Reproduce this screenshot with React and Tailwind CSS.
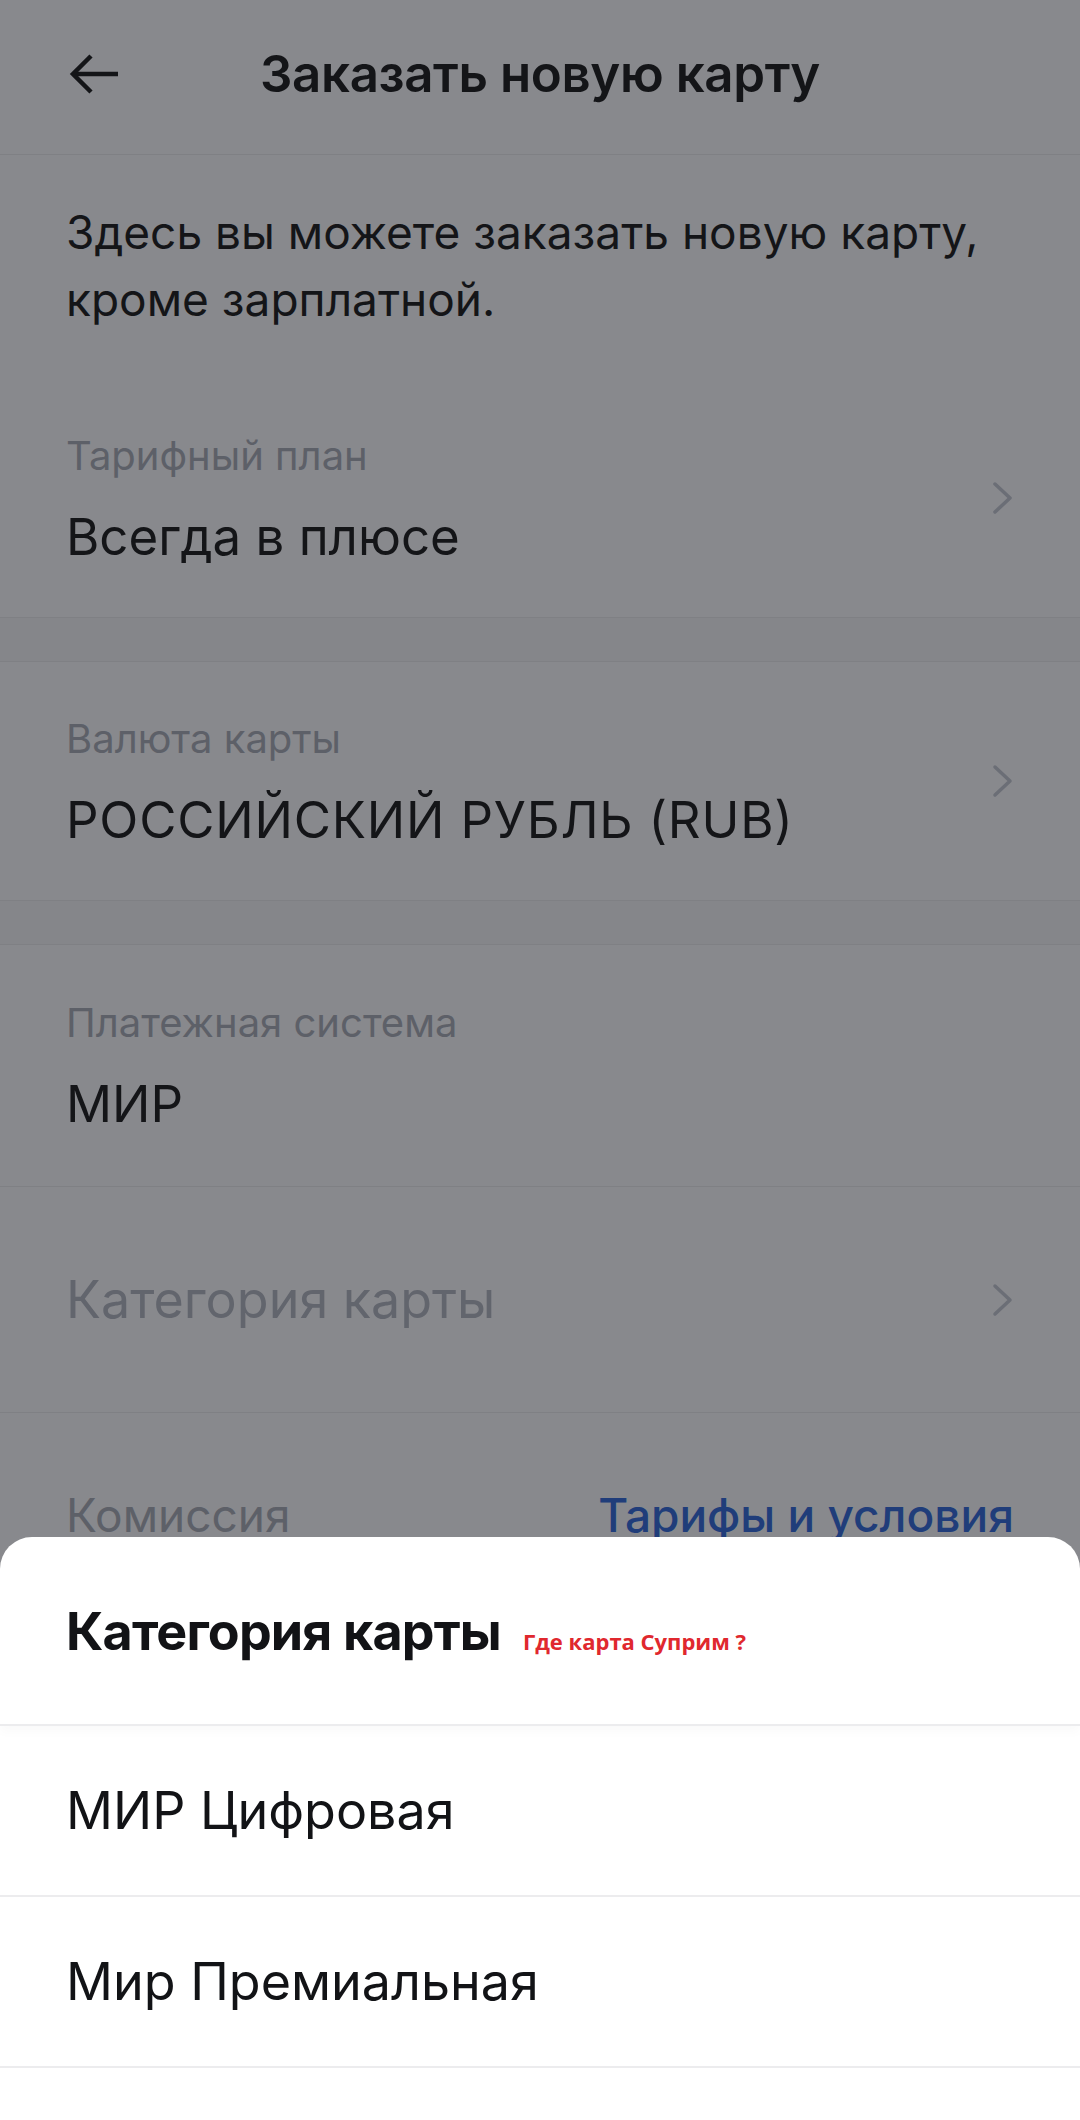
import React from 'react';

const font = { fontFamily: 'Inter, "Noto Sans", sans-serif' };

const Chevron = () => (
  <svg width="22" height="34" viewBox="0 0 22 34" fill="none" className="shrink-0">
    <path d="M3 3L18 17L3 31" stroke="#6b6e76" strokeWidth="3.5" strokeLinecap="round" strokeLinejoin="round" />
  </svg>
);

const FieldCard = ({ label, value, arrow, height = 'h-[238px]', valueClass = '' }) => (
  <div className={`${height} flex items-center justify-between px-[66px] bg-[#88898d]`}>
    <div className="flex flex-col">
      <span className="text-[40px] leading-[56px] text-[#5d6068]">{label}</span>
      <span className={`mt-[21px] text-[51px] leading-[64px] text-[#141518] ${valueClass}`}>{value}</span>
    </div>
    {arrow && <Chevron />}
  </div>
);

const Gap = () => <div className="h-[45px] bg-[#85868a] border-y border-[#7f8084]" />;

const App = () => {
  const options = ['МИР Цифровая', 'Мир Премиальная'];

  return (
    <div className="relative w-[1080px] h-[2120px] overflow-hidden bg-[#88898d]" style={font}>
      {/* header */}
      <div className="h-[155px] pb-[6px] grid grid-cols-[1fr_auto_1fr] items-center border-b border-[#7f8084]">
        <div className="pl-[68px]">
          <svg width="51" height="42" viewBox="0 0 51 42" fill="none">
            <path d="M50 21H5" stroke="#141518" strokeWidth="4.5" />
            <path d="M23 3L5 21L23 39" stroke="#141518" strokeWidth="4.5" />
          </svg>
        </div>
        <h1 className="text-[51px] leading-[64px] font-semibold text-[#141518] tracking-[-0.4px]">
          Заказать новую карту
        </h1>
        <div />
      </div>

      {/* description */}
      <div className="pt-[44px] pb-[46px] px-[66px]">
        <p className="text-[46px] leading-[67px] text-[#141518]">
          Здесь вы можете заказать новую карту,
          <br />
          кроме зарплатной.
        </p>
      </div>

      <FieldCard label="Тарифный план" value="Всегда в плюсе" arrow />
      <Gap />
      <FieldCard label="Валюта карты" value="РОССИЙСКИЙ РУБЛЬ (RUB)" arrow valueClass="tracking-[0.8px]" />
      <Gap />
      <FieldCard label="Платежная система" value="МИР" height="h-[241px]" />

      <div className="h-[227px] flex items-center justify-between px-[66px] border-y border-[#7f8084]">
        <span className="text-[52px] leading-[64px] text-[#62656d]">Категория карты</span>
        <Chevron />
      </div>

      <div className="pt-[70px] px-[66px] flex items-center justify-between">
        <span className="text-[46px] leading-[64px] text-[#5d6068]">Комиссия</span>
        <span className="text-[46px] leading-[64px] font-medium text-[#203d7a]">Тарифы и условия</span>
      </div>

      {/* bottom sheet */}
      <div className="absolute left-0 right-0 bottom-0 h-[583px] bg-white rounded-t-[32px] flex flex-col">
        <div className="h-[189px] shrink-0 pt-[63px] px-[66px] border-b-2 border-[#ececee] shadow-[0_6px_10px_rgba(0,0,0,0.025)]">
          <div className="flex items-baseline gap-[22px]">
            <h2 className="text-[52px] leading-[64px] font-bold text-[#121316] tracking-[-0.85px]">
              Категория карты
            </h2>
            <span
              className="text-[22px] font-bold text-[#e0282e]"
              style={{ fontFamily: '"Open Sans", "Liberation Sans", sans-serif' }}
            >
              Где карта Суприм ?
            </span>
          </div>
        </div>
        {options.map(item => (
          <div key={item} className="h-[171px] shrink-0 flex items-center px-[66px] border-b-2 border-[#ececee]">
            <span className="text-[52px] leading-[64px] text-[#121316]">{item}</span>
          </div>
        ))}
        <div className="flex-1" />
      </div>
    </div>
  );
};

export default App;
